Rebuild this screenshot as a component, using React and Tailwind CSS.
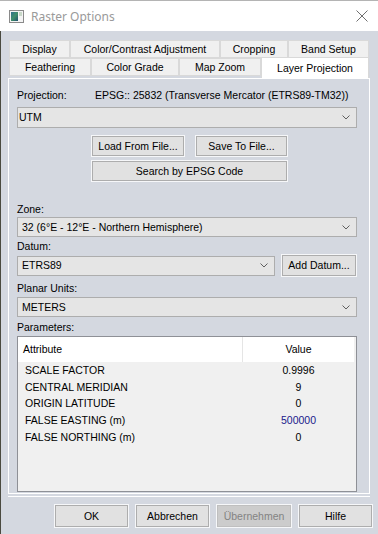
import React from "react";

// tiny chevron used in the combo boxes
function Chevron() {
  return (
    <svg width="8" height="5" viewBox="0 0 8 5">
      <path d="M0.5 0.5 L4 4 L7.5 0.5" stroke="#5f5f5f" fill="none" strokeWidth="1" />
    </svg>
  );
}

function Combo({ value, className = "" }) {
  return (
    <div className={"h-[20px] border border-[#adadad] bg-[#e5e5e5] flex items-center justify-between pl-[4px] pr-[6px] " + className}>
      <span>{value}</span>
      <Chevron />
    </div>
  );
}

function Btn({ children, className = "", disabled = false }) {
  return (
    <div
      className={
        "flex items-center justify-center border ring-1 ring-white/80 " +
        (disabled ? "bg-[#cccccc] border-[#bfbfbf] text-[#838383] " : "bg-[#e1e1e1] border-[#adadad] ") +
        className
      }
    >
      {children}
    </div>
  );
}

function Tab({ label, w, selected }) {
  if (selected) {
    return (
      <div className={`${w} h-[21px] -mt-px bg-white border border-b-0 border-[#d9d9d9] flex items-center justify-center relative z-10`}>
        {label}
      </div>
    );
  }
  return (
    <div className={`${w} h-[18px] bg-[#f0f0f0] border border-[#d9d9d9] flex items-center justify-center`}>
      {label}
    </div>
  );
}

export default function App() {
  const params = [
    { name: "SCALE FACTOR", value: "0.9996" },
    { name: "CENTRAL MERIDIAN", value: "9" },
    { name: "ORIGIN LATITUDE", value: "0" },
    { name: "FALSE EASTING (m)", value: "500000", changed: true },
    { name: "FALSE NORTHING (m)", value: "0" },
  ];

  return (
    <div className="w-[378px] h-[534px] bg-[#d4d8e0] font-['Liberation_Sans',Arial,sans-serif] text-[10.5px] leading-[13px] text-black overflow-hidden flex flex-col">
      {/* title bar */}
      <div className="h-[31px] bg-white border-t border-[#b4b4b4] flex items-center shrink-0">
        <svg className="ml-[9px]" width="15" height="13" viewBox="0 0 15 13">
          <rect x="0.5" y="0.5" width="14" height="12" fill="#f4f4f4" stroke="#8a8a8a" />
          <defs>
            <linearGradient id="rg" x1="0" y1="0" x2="1" y2="1">
              <stop offset="0" stopColor="#2f6f8f" />
              <stop offset="0.5" stopColor="#3f8f6a" />
              <stop offset="1" stopColor="#1f4f6f" />
            </linearGradient>
          </defs>
          <rect x="2" y="2" width="7" height="9" fill="url(#rg)" />
          <rect x="10" y="2" width="3" height="4" fill="#c8d8c8" />
        </svg>
        <span className="ml-[7px] text-[12px] text-[#9a9a9a] font-['Segoe_UI','Noto_Sans',sans-serif]">Raster Options</span>
        <svg className="ml-auto mr-[10px]" width="12" height="12" viewBox="0 0 12 12">
          <path d="M0.5 0.5 L11.5 11.5 M11.5 0.5 L0.5 11.5" stroke="#6f6f6f" strokeWidth="1" />
        </svg>
      </div>

      <div className="flex-1 border-l border-[#4a4a40] flex flex-col">
        {/* tabs */}
        <div className="mt-[9px] ml-[8px] flex flex-col">
          <div className="flex">
            <Tab label="Display" w="w-[61px]" />
            <Tab label="Color/Contrast Adjustment" w="w-[150px]" />
            <Tab label="Cropping" w="w-[68px]" />
            <Tab label="Band Setup" w="w-[81px]" />
          </div>
          <div className="flex items-start h-[20px]">
            <Tab label="Feathering" w="w-[82px]" />
            <Tab label="Color Grade" w="w-[88px]" />
            <Tab label="Map Zoom" w="w-[82px]" />
            <Tab label="Layer Projection" w="w-[108px]" selected />
          </div>
        </div>

        {/* tab page */}
        <div className="ml-[7px] w-[362px] h-[416px] border border-white pl-[8px] pr-[12px] flex flex-col">
          <div className="mt-[10px] flex h-[13px]">
            <span className="w-[78px]">Projection:</span>
            <span>EPSG:: 25832 (Transverse Mercator (ETRS89-TM32))</span>
          </div>
          <Combo value="UTM" className="mt-[5px] h-[21px] !pl-[1px]" />
          <div className="mt-[8px] flex gap-[12px] pl-[75px]">
            <Btn className="w-[92px] h-[20px]">Load From File...</Btn>
            <Btn className="w-[91px] h-[20px]">Save To File...</Btn>
          </div>
          <div className="mt-[5px] pl-[75px]">
            <Btn className="w-[195px] h-[20px]">Search by EPSG Code</Btn>
          </div>

          <div className="mt-[22px]">Zone:</div>
          <Combo value="32 (6°E - 12°E - Northern Hemisphere)" className="mt-[1px]" />

          <div className="mt-[3px]">Datum:</div>
          <div className="mt-[2px] flex items-center">
            <Combo value="ETRS89" className="w-[258px]" />
            <Btn className="ml-[7px] w-[74px] h-[21px]">Add Datum...</Btn>
          </div>

          <div className="mt-[6px]">Planar Units:</div>
          <Combo value="METERS" className="mt-[2px]" />

          <div className="mt-[4px]">Parameters:</div>
          <div className="mt-[2px] h-[156px] border border-[#8e9096] bg-[#f0f0f0] flex flex-col">
            <div className="flex h-[25px] shrink-0">
              <div className="flex w-[336px] bg-white">
                <div className="w-[225px] border-r border-[#e5e5e5] flex items-center pl-[5px]">Attribute</div>
                <div className="flex-1 flex items-center justify-center">Value</div>
              </div>
            </div>
            {params.map((p) => (
              <div key={p.name} className="flex h-[16.75px] items-center">
                <div className="w-[225px] pl-[7px]">{p.name}</div>
                <div className={"w-[111px] text-center " + (p.changed ? "text-[#1a1a8c]" : "")}>{p.value}</div>
              </div>
            ))}
          </div>
        </div>
        <div className="ml-[7px] mt-[2px] w-[362px] h-px bg-white" />

        {/* dialog buttons */}
        <div className="mt-[8px] flex justify-end gap-[8px] pr-[6px]">
          <Btn className="w-[73px] h-[22px]">OK</Btn>
          <Btn className="w-[73px] h-[22px]">Abbrechen</Btn>
          <Btn className="w-[74px] h-[22px]" disabled>Übernehmen</Btn>
          <Btn className="w-[73px] h-[22px]">Hilfe</Btn>
        </div>
      </div>
    </div>
  );
}
